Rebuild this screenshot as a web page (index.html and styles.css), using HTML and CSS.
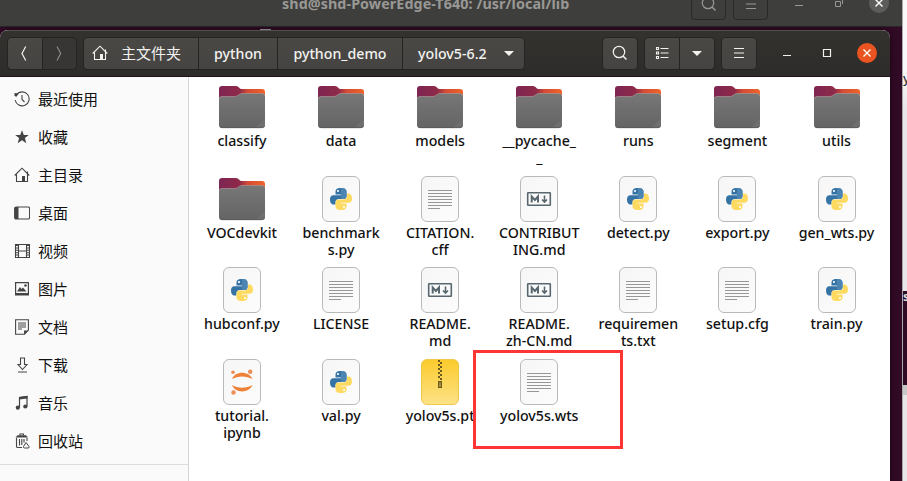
FILE: index.html
```
<!DOCTYPE html>
<html lang="zh-CN">
<head>
<meta charset="utf-8">
<title>yolov5-6.2</title>
<link rel="stylesheet" href="styles.css">
</head>
<body>
<svg class="defs" width="0" height="0" aria-hidden="true">
  <defs>
    <linearGradient id="tab" x1="0" x2="1" y1="0" y2="0"><stop offset="0" stop-color="#7d2553"/><stop offset=".45" stop-color="#8f2a48"/><stop offset=".62" stop-color="#d34c35"/><stop offset="1" stop-color="#ef6429"/></linearGradient>
    <linearGradient id="front" x1="0" x2="0" y1="0" y2="1"><stop offset="0" stop-color="#777"/><stop offset="1" stop-color="#646464"/></linearGradient>
    <linearGradient id="paper" x1="0" x2="1" y1="0" y2="1"><stop offset="0" stop-color="#f6f6f6"/><stop offset="1" stop-color="#fcfcfc"/></linearGradient>
    <linearGradient id="zip" x1="0" x2="0" y1="0" y2="1"><stop offset="0" stop-color="#fbcb2c"/><stop offset="1" stop-color="#fde287"/></linearGradient>
    <symbol id="folder" viewBox="0 0 48 46">
      <path d="M1 5Q1 2 4 2H18Q20 2 21 3.500Q22 5 24 5H44Q47 5 47 8V20H1Z" fill="url(#tab)"/>
      <path d="M1 14.500Q1 12.500 4 12.500H17Q19 12.500 20.500 11Q22 9.500 24 9.500H44Q47 9.500 47 12.500V41Q47 44 44 44H4Q1 44 1 41Z" fill="url(#front)"/>
      <path d="M1.300 14.500Q1.500 12.500 4 12.500H17Q19 12.500 20.500 11Q22 9.500 24 9.500H44Q46.500 9.500 46.800 12" fill="none" stroke="#a99694" stroke-width=".7"/>
      <path d="M47 35V41Q47 44 44 44H37Z" fill="#fff" opacity=".06"/>
      <path d="M2 42.500Q3 43.700 4 43.700H44Q45.500 43.700 46.500 42" fill="none" stroke="#565656" stroke-width=".7"/>
    </symbol>
    <symbol id="sheet" viewBox="0 0 48 46">
      <rect x="5.500" y=".5" width="37" height="45" rx="5.500" fill="url(#paper)" stroke="#b9b9b9"/>
    </symbol>
    <symbol id="text" viewBox="0 0 48 46">
      <use href="#sheet"/>
      <path d="M12 14.500H36M12 17.500H36M12 20.500H36M12 23.500H36M12 26.500H36M12 29.500H36M12 32.500H24" stroke="#8b8b8b" stroke-width=".9"/>
    </symbol>
    <symbol id="python" viewBox="0 0 48 46">
      <use href="#sheet"/>
      <path d="M24 12C19 12 18.500 14 18.500 16V18.500H24.200V19.300H16.500C14 19.300 13 21 13 23.500S14 28.500 16.500 28.500H18.500V26C18.500 24 20 23 22 23H26.500C28.500 23 29.500 22 29.500 20V16C29.500 13.500 28 12 24 12Z" fill="#3673a5"/>
      <path d="M24 12C28 12 29.500 13.500 29.500 16V20C29.500 22 28.500 23 26.500 23H24Z" fill="#4d85b2"/>
      <path d="M24 34C29 34 29.500 32 29.500 30V27.500H23.800V26.700H31.500C34 26.700 35 25 35 22.500S34 17.500 31.500 17.500H30V20.500C30 22.500 28.500 23.500 26.500 23.500H21.500C19.500 23.500 18.500 24.500 18.500 26.500V30C18.500 32.500 20 34 24 34Z" fill="#ffda61"/>
      <circle cx="21" cy="15" r="1.100" fill="#fff"/><circle cx="27" cy="31" r="1.100" fill="#fff"/>
    </symbol>
    <symbol id="markdown" viewBox="0 0 48 46">
      <use href="#sheet"/>
      <rect x="12.700" y="16.700" width="22.600" height="12.600" rx=".6" fill="#fafafa" stroke="#58676e" stroke-width="1.600"/>
      <path d="M16.700 26.500V20.500L19.900 24L23 20.500V26.500" fill="none" stroke="#58676e" stroke-width="2"/>
      <path d="M29.500 19.500V25.500M27 23.500L29.500 26L32 23.500" fill="none" stroke="#58676e" stroke-width="1.600"/>
    </symbol>
    <symbol id="jupyter" viewBox="0 0 48 46">
      <use href="#sheet"/>
      <path d="M14 20C17 11.500 31 11.500 34.500 20C28 16.500 20 16.500 14 20ZM14 26C20 29.500 28 29.500 34.500 26C31 34.500 17 34.500 14 26Z" fill="#ee8038"/>
      <circle cx="15" cy="13.200" r="1.800" fill="#ee8d55"/><circle cx="32.200" cy="12.700" r="2.200" fill="#ee8d55"/><circle cx="15.500" cy="33.500" r="2.200" fill="#ee8d55"/>
    </symbol>
    <symbol id="archive" viewBox="0 0 48 46">
      <rect x="5.500" y=".5" width="37" height="45" rx="5.500" fill="url(#zip)" stroke="#edc947"/>
      <path d="M23 1V21M25 3V21" stroke="#6d5a20" stroke-width="2" stroke-dasharray="2 2"/>
      <path d="M22.700 22.700H25.300V28.300H22.700Z" fill="#fbd865" stroke="#6d5a20" stroke-width="1.400"/><path d="M24 24V26" stroke="#6d5a20"/>
    </symbol>
    <symbol id="home" viewBox="0 0 16 16">
      <path d="M.7 8.500L8 1.200L15.300 8.500M2.500 7.500V14.500H13.500V4.500" fill="none" stroke="currentColor" stroke-width="1.100"/><path d="M8 9H11V15H8Z" fill="currentColor"/>
    </symbol>
    <symbol id="search" viewBox="0 0 16 16">
      <circle cx="7" cy="7" r="5.700" fill="none" stroke="currentColor" stroke-width="1.200"/><path d="M11 11L14.500 14.500" stroke="currentColor" stroke-width="1.500"/>
    </symbol>
    <symbol id="menu" viewBox="0 0 16 16"><path d="M3 3.500H13M3 8H13M3 12.500H13" stroke="currentColor" stroke-width="1.100"/></symbol>
    <symbol id="down" viewBox="0 0 16 16"><path d="M3 6H13L8 11Z" fill="currentColor"/></symbol>
    <symbol id="close" viewBox="0 0 16 16"><path d="M4.500 4.500L11.500 11.500M11.500 4.500L4.500 11.500" stroke="currentColor" stroke-width="1.400"/></symbol>
  </defs>
</svg>
<div class="desktop">
  <section class="terminal">
    <h1 class="terminal-title">shd@shd-PowerEdge-T640: /usr/local/lib</h1>
    <div class="term-tools">
      <span class="term-btn"><svg><use href="#search"/></svg></span>
      <span class="term-btn"><svg><use href="#menu"/></svg></span>
    </div>
    <div class="term-controls">
      <svg viewBox="0 0 16 16"><path d="M4 10.500H12" stroke="currentColor"/></svg>
      <svg viewBox="0 0 16 16"><path d="M4.500 6.500H9.500V11.500H4.500ZM11.500 3V9" fill="none" stroke="currentColor"/></svg>
      <span class="round gray"><svg><use href="#close"/></svg></span>
    </div>
  </section>
  <div class="tick"></div>
  <aside class="side-window">
    <div class="side-page">y</div>
    <div class="side-term">s</div>
    <div class="side-bar"></div>
  </aside>

  <main class="files">
    <header class="toolbar">
      <div class="group nav">
        <span class="btn"><svg viewBox="0 0 16 16"><path d="M8.700 1.500L5 8.500L8.700 15.500" fill="none" stroke="currentColor" stroke-width="1.200"/></svg></span>
        <span class="btn off"><svg viewBox="0 0 16 16"><path d="M6 1.500L9.700 8.500L6 15.500" fill="none" stroke="currentColor" stroke-width="1.200"/></svg></span>
      </div>
      <nav class="group path">
        <span class="btn crumb-home"><svg><use href="#home"/></svg><b class="cjk">主文件夹</b></span>
        <span class="btn crumb-python">python</span>
        <span class="btn crumb-demo">python_demo</span>
        <span class="btn crumb-yolo">yolov5-6.2<svg><use href="#down"/></svg></span>
      </nav>
      <div class="tools">
        <div class="group"><span class="btn"><svg><use href="#search"/></svg></span></div>
        <div class="group">
          <span class="btn"><svg viewBox="0 0 16 16"><path d="M2.500 2.500H4.500V4.500H2.500ZM2.500 7H4.500V9H2.500ZM2.500 11.500H4.500V13.500H2.500ZM6.500 3.500H14.500M6.500 8H14.500M6.500 12.500H14.500" fill="none" stroke="currentColor" stroke-width="1.100"/></svg></span>
          <span class="btn"><svg><use href="#down"/></svg></span>
        </div>
        <div class="group"><span class="btn"><svg><use href="#menu"/></svg></span></div>
      </div>
      <div class="controls">
        <svg viewBox="0 0 16 16"><path d="M4 10.500H12" stroke="currentColor"/></svg>
        <svg viewBox="0 0 16 16"><path d="M4.500 4.500H11.500V11.500H4.500Z" fill="none" stroke="currentColor" stroke-width="1.200"/></svg>
        <span class="round orange"><svg><use href="#close"/></svg></span>
      </div>
    </header>
    <div class="content">
      <ul class="sidebar">
        <li><svg viewBox="0 0 16 16"><path d="M2.500 3.700A7 7 0 1 1 1.200 9M8 4V8.500L10.500 11" fill="none" stroke="currentColor" stroke-width="1.100"/><path d="M.5 2L4.700 2.500L2.500 5.700L.5 5Z" fill="currentColor"/></svg>最近使用</li>
        <li><svg viewBox="0 0 16 16"><path d="M8 1.300L9.800 6H14.800L10.900 9.100L12.300 14.200L8 11.200L3.700 14.200L5.100 9.100L1.200 6H6.200Z" fill="currentColor"/></svg>收藏</li>
        <li><svg><use href="#home"/></svg>主目录</li>
        <li><svg viewBox="0 0 16 16"><rect x=".6" y="2" width="15" height="12" rx="1.500" fill="none" stroke="currentColor" stroke-width="1.100"/><path d="M1 2H4.500V14H1Z" fill="currentColor"/></svg>桌面</li>
        <li><svg viewBox="0 0 16 16"><path d="M1.500 1.500H15.500V14.500H1.500ZM4.500 1.500V14.500M12.500 1.500V14.500M4.500 8H12.500" fill="none" stroke="currentColor" stroke-width="1.100"/><path d="M3 2V14M14 2V14" stroke="currentColor" stroke-width="2" stroke-dasharray="1 1.400"/></svg>视频</li>
        <li><svg viewBox="0 0 16 16"><path d="M1.600 1.600H14.400V13H1.600Z" fill="none" stroke="currentColor" stroke-width="1.200"/><path d="M1 12H15V14.500H1ZM3 10.500L6 6L7.500 8L9 6.500L12.500 10.500Z" fill="currentColor"/><circle cx="11.500" cy="4.500" r="1.300" fill="currentColor"/></svg>图片</li>
        <li><svg viewBox="0 0 16 16"><path d="M1.600 .8H14.400V11L10.500 15.200H1.600ZM4 4H12M4 6H12M4 8H12M4 10H8" fill="none" stroke="currentColor" stroke-width="1.100"/><path d="M10 15.500V11.500H14.500Z" fill="currentColor"/></svg>文档</li>
        <li><svg viewBox="0 0 16 16"><path d="M6.500 1H10.500V7.500H13L8.500 12.500L4 7.500H6.500ZM4 15H13" fill="none" stroke="currentColor" stroke-width="1.100"/></svg>下载</li>
        <li><svg viewBox="0 0 16 16"><path d="M5.500 12.500V2.500L13 1.500V11.500" fill="none" stroke="currentColor" stroke-width="1.200"/><path d="M5 2L13.500 1V3.500L5 4.500Z" fill="currentColor"/><circle cx="3.800" cy="12.700" r="2.100" fill="currentColor"/><circle cx="11.300" cy="11.500" r="2.100" fill="currentColor"/></svg>音乐</li>
        <li><svg viewBox="0 0 16 16"><path d="M6 2.500V1H9.500V2.500M2.500 5V13.500Q2.500 14.500 4 14.500H8M5.500 6V12.500M7.800 6V12M10 6V9.500M13 5V8" fill="none" stroke="currentColor" stroke-width="1.100"/><path d="M1.500 4.500L3.500 2.200H12L14 4.500Z" fill="currentColor"/><path d="M9.500 13.500L12 9.500L15 13.500Q15.500 15 14 15H10.500Q9 15 9.500 13.500Z" fill="none" stroke="currentColor"/></svg>回收站</li>
      </ul>
      <div class="grid">
        <figure><svg><use href="#folder"/></svg><figcaption>classify</figcaption></figure>
        <figure><svg><use href="#folder"/></svg><figcaption>data</figcaption></figure>
        <figure><svg><use href="#folder"/></svg><figcaption>models</figcaption></figure>
        <figure><svg><use href="#folder"/></svg><figcaption>__pycache_<br>_</figcaption></figure>
        <figure><svg><use href="#folder"/></svg><figcaption>runs</figcaption></figure>
        <figure><svg><use href="#folder"/></svg><figcaption>segment</figcaption></figure>
        <figure><svg><use href="#folder"/></svg><figcaption>utils</figcaption></figure>
        <figure><svg><use href="#folder"/></svg><figcaption>VOCdevkit</figcaption></figure>
        <figure><svg><use href="#python"/></svg><figcaption>benchmark<br>s.py</figcaption></figure>
        <figure><svg><use href="#text"/></svg><figcaption>CITATION.<br>cff</figcaption></figure>
        <figure><svg><use href="#markdown"/></svg><figcaption>CONTRIBUT<br>ING.md</figcaption></figure>
        <figure><svg><use href="#python"/></svg><figcaption>detect.py</figcaption></figure>
        <figure><svg><use href="#python"/></svg><figcaption>export.py</figcaption></figure>
        <figure><svg><use href="#python"/></svg><figcaption>gen_wts.py</figcaption></figure>
        <figure><svg><use href="#python"/></svg><figcaption>hubconf.py</figcaption></figure>
        <figure><svg><use href="#text"/></svg><figcaption>LICENSE</figcaption></figure>
        <figure><svg><use href="#markdown"/></svg><figcaption>README.<br>md</figcaption></figure>
        <figure><svg><use href="#markdown"/></svg><figcaption>README.<br>zh-CN.md</figcaption></figure>
        <figure><svg><use href="#text"/></svg><figcaption>requiremen<br>ts.txt</figcaption></figure>
        <figure><svg><use href="#text"/></svg><figcaption>setup.cfg</figcaption></figure>
        <figure><svg><use href="#python"/></svg><figcaption>train.py</figcaption></figure>
        <figure><svg><use href="#jupyter"/></svg><figcaption>tutorial.<br>ipynb</figcaption></figure>
        <figure><svg><use href="#python"/></svg><figcaption>val.py</figcaption></figure>
        <figure><svg><use href="#archive"/></svg><figcaption>yolov5s.pt</figcaption></figure>
        <figure><svg><use href="#text"/></svg><figcaption>yolov5s.wts</figcaption></figure>
      </div>
    </div>
  </main>
  <div class="highlight"></div>
</div>
</body>
</html>
```
FILE: styles.css
```
* { box-sizing: border-box; }
body { margin: 0; overflow: hidden; font: 500 14.2px/17px "Noto Sans", "Noto Sans CJK SC", sans-serif; color: #111; }
svg { width: 16px; height: 16px; flex: none; display: block; }
.defs { position: absolute; width: 0; height: 0; }
.desktop { position: relative; width: 907px; height: 481px; overflow: hidden; background: #310a25; }

.terminal { position: absolute; left: 0; top: 0; width: 902px; height: 27px; background: #3e3e3d; border-bottom: 1px solid #292727; color: #999895; overflow: hidden; }
.terminal-title { margin: -5px 0 0 282px; font: bold 14.3px/17px "Noto Sans", sans-serif; letter-spacing: .09px; white-space: nowrap; }
.term-tools { position: absolute; left: 691px; top: -13px; display: flex; gap: 7px; }
.term-btn { display: flex; align-items: center; justify-content: center; width: 35px; height: 33px; border: 1px solid #292928; border-radius: 4px; }
.term-controls { position: absolute; left: 791px; top: -7px; display: flex; align-items: center; gap: 24px; height: 20px; }
.term-controls .round { margin-left: -2px; }

.tick { position: absolute; left: 260px; top: 29px; width: 11px; height: 1px; background: #aaa; }
.side-window { position: absolute; left: 902px; top: 0; width: 5px; height: 481px; border-left: 1px solid #aaa; background: #e8e6e7; overflow: hidden; display: flex; flex-direction: column; }
.side-page { height: 291px; padding-top: 70px; background: linear-gradient(#faf9fa 70px, #e8e6e8 110px); font-size: 13px; color: #333; }
.side-term { height: 94px; background: #310a25; color: #ddd; font: bold 13px/10px "Noto Sans", sans-serif; }
.side-bar { height: 10px; background: #c8c8c8; }

.files { position: absolute; left: 0; top: 30px; width: 890px; height: 451px; border-radius: 8px 8px 0 0; overflow: hidden; box-shadow: 0 0 6px #0008; background: #fff; }
.toolbar { display: flex; height: 47px; padding: 6px 13px 0 7px; background: linear-gradient(#33322f, #2d2c2a); border-top: 1px solid #53504c; border-bottom: 1px solid #1d1318; color: #f3f2ef; }
.group { display: flex; height: 33px; border: 1px solid #242422; border-radius: 5px; overflow: hidden; background: #242422; gap: 1px; }
.btn { display: flex; align-items: center; justify-content: center; width: 34px; padding-bottom: 1px; background: linear-gradient(#494845, #454442); white-space: nowrap; }
.off { background: #373634; color: #8b8985; }
.nav { width: 70px; }
.path { width: 442px; margin-left: 6px; }
.crumb-home { width: 114px; justify-content: flex-start; padding-left: 8px; }
.crumb-home svg { margin-right: 13px; }
.cjk { font-weight: 400; font-size: 15px; }
.crumb-python { width: 78px; }
.crumb-demo { width: 124px; }
.crumb-yolo { flex: 1; justify-content: flex-start; padding-left: 15px; }
.crumb-yolo svg { margin-left: 14px; }
.tools { display: flex; gap: 6px; margin-left: auto; }
.controls { display: flex; align-items: center; gap: 24px; height: 32px; margin-left: 22px; }
.round { display: flex; align-items: center; justify-content: center; width: 20px; height: 20px; border-radius: 50%; color: #fff; }
.controls .round { margin-left: -2px; }
.orange { background: #e95420; }
.gray { background: #5c5c5b; }

.content { display: flex; height: 404px; }
.sidebar { margin: 0; padding: 3px 0 0; width: 189px; list-style: none; border-right: 1px solid #d5d5d5; background: #fafafa; color: #111; }
.sidebar li { display: flex; align-items: center; gap: 8px; height: 38px; padding-left: 14px; font-size: 15px; font-weight: 400; }
.sidebar svg { color: #444; }
.sidebar::after { content: ""; display: block; margin-top: 4px; border-top: 1px solid #ddd; }
.grid { display: grid; grid-template-columns: repeat(7, 99.1px); grid-auto-rows: 91.6px; padding: 7px 0 0 3.400px; }
figure { margin: 0; display: flex; flex-direction: column; align-items: center; }
figure svg { width: 48px; height: 46px; }
figcaption { margin-top: 2px; text-align: center; white-space: nowrap; }
.highlight { position: absolute; left: 473px; top: 350px; width: 150px; height: 99px; border: 3px solid #fd3535; }
```
